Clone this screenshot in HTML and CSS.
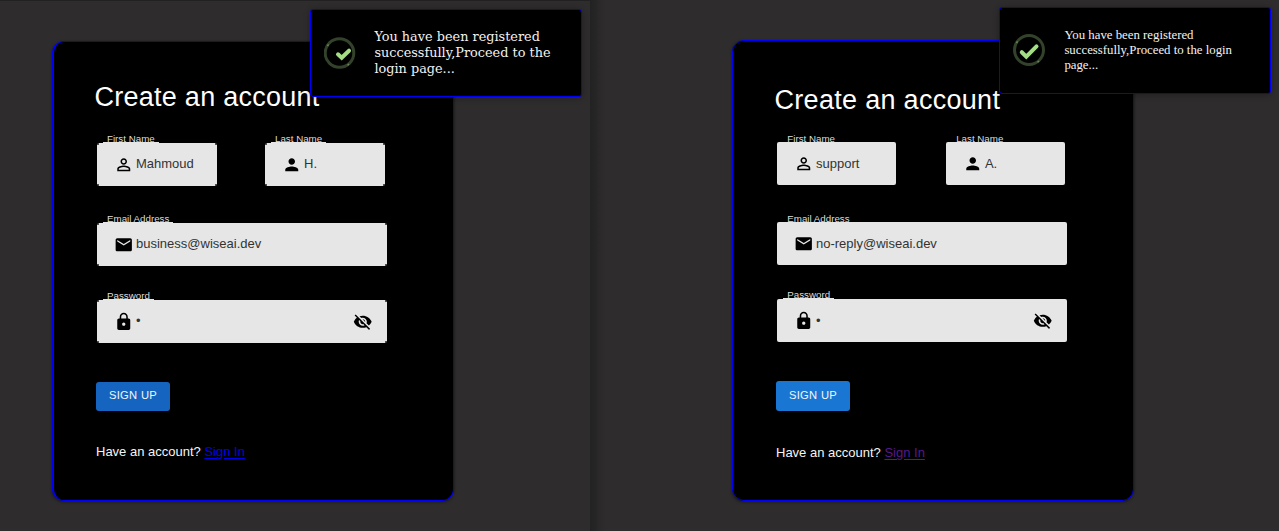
FILE: index.html
```
<!DOCTYPE html>
<html lang="en">
<head>
<meta charset="utf-8">
<title>Create an account</title>
<link rel="stylesheet" href="styles.css">
</head>
<body>
<svg width="0" height="0" class="defs" aria-hidden="true">
  <symbol id="person-outline" viewBox="0 0 24 24"><path d="M12 5.900c1.160 0 2.100.94 2.100 2.100s-.94 2.100-2.100 2.100S9.900 9.160 9.900 8s.94-2.100 2.100-2.100m0 9c2.970 0 6.100 1.460 6.100 2.100v1.100H5.900V17c0-.640 3.130-2.100 6.100-2.100M12 4C9.790 4 8 5.790 8 8s1.790 4 4 4 4-1.790 4-4-1.790-4-4-4zm0 9c-2.670 0-8 1.340-8 4v3h16v-3c0-2.660-5.330-4-8-4z"/></symbol>
  <symbol id="person" viewBox="0 0 24 24"><path d="M12 12c2.210 0 4-1.790 4-4s-1.790-4-4-4-4 1.790-4 4 1.790 4 4 4zm0 2c-2.670 0-8 1.340-8 4v2h16v-2c0-2.660-5.330-4-8-4z"/></symbol>
  <symbol id="mail" viewBox="0 0 24 24"><path d="M20 4H4c-1.100 0-1.990.9-1.990 2L2 18c0 1.100.9 2 2 2h16c1.100 0 2-.9 2-2V6c0-1.100-.9-2-2-2zm0 4l-8 5-8-5V6l8 5 8-5v2z"/></symbol>
  <symbol id="lock" viewBox="0 0 24 24"><path d="M18 8h-1V6c0-2.760-2.240-5-5-5S7 3.240 7 6v2H6c-1.100 0-2 .9-2 2v10c0 1.100.9 2 2 2h12c1.100 0 2-.9 2-2V10c0-1.100-.9-2-2-2zm-6 9c-1.100 0-2-.9-2-2s.9-2 2-2 2 .9 2 2-.9 2-2 2zm3.100-9H8.900V6c0-1.710 1.390-3.100 3.100-3.100 1.710 0 3.100 1.390 3.100 3.100v2z"/></symbol>
  <symbol id="eye-off" viewBox="0 0 24 24"><path d="M12 7c2.760 0 5 2.240 5 5 0 .65-.13 1.260-.36 1.830l2.920 2.920c1.510-1.260 2.700-2.890 3.430-4.750-1.730-4.390-6-7.500-11-7.500-1.400 0-2.740.25-3.980.7l2.160 2.160C10.740 7.130 11.350 7 12 7zM2 4.270l2.280 2.280.46.46C3.080 8.300 1.780 10.020 1 12c1.730 4.390 6 7.500 11 7.500 1.550 0 3.030-.3 4.380-.84l.42.42L19.730 22 21 20.730 3.270 3 2 4.270zM7.530 9.800l1.550 1.550c-.05.21-.08.43-.08.65 0 1.660 1.340 3 3 3 .22 0 .44-.03.65-.08l1.550 1.550c-.67.33-1.410.53-2.200.53-2.760 0-5-2.240-5-5 0-.79.2-1.530.53-2.200zm4.310-.78l3.150 3.150.02-.16c0-1.660-1.340-3-3-3l-.17.01z"/></symbol>
</svg>

<main class="screens">
  <section class="pane pane-left">
    <div class="card">
      <h1 class="title">Create an account</h1>
      <form class="form">
        <div class="names">
          <div class="field"><label class="label">First Name</label><div class="box"><svg class="icon"><use href="#person-outline"/></svg><span>Mahmoud</span></div></div>
          <div class="field"><label class="label">Last Name</label><div class="box"><svg class="icon"><use href="#person"/></svg><span>H.</span></div></div>
        </div>
        <div class="field email"><label class="label">Email Address</label><div class="box"><svg class="icon"><use href="#mail"/></svg><span>business@wiseai.dev</span></div></div>
        <div class="field password"><label class="label">Password</label><div class="box"><svg class="icon"><use href="#lock"/></svg><span class="dots">•</span><svg class="icon eye"><use href="#eye-off"/></svg></div></div>
        <button type="button" class="submit">SIGN UP</button>
      </form>
      <p class="footer">Have an account? <a href="#" class="link">Sign In</a></p>
    </div>
    <aside class="toast">
      <svg class="status" viewBox="0 0 32 32"><circle class="ring" cx="15.500" cy="16" r="14.300"/><path class="glint" d="M3.500 9l1-1.600M23.500 28.200l1.600-1"/><path class="tick" d="M14 17.300l3.700 3.400 7.300-7"/></svg>
      <p class="message">You have been registered<br>successfully,Proceed to the<br>login page...</p>
    </aside>
  </section>

  <section class="pane pane-right">
    <div class="card">
      <h1 class="title">Create an account</h1>
      <form class="form">
        <div class="names">
          <div class="field"><label class="label">First Name</label><div class="box"><svg class="icon"><use href="#person-outline"/></svg><span>support</span></div></div>
          <div class="field"><label class="label">Last Name</label><div class="box"><svg class="icon"><use href="#person"/></svg><span>A.</span></div></div>
        </div>
        <div class="field email"><label class="label">Email Address</label><div class="box"><svg class="icon"><use href="#mail"/></svg><span>no-reply@wiseai.dev</span></div></div>
        <div class="field password"><label class="label notched">Password</label><div class="box"><svg class="icon"><use href="#lock"/></svg><span class="dots">•</span><svg class="icon eye"><use href="#eye-off"/></svg></div></div>
        <button type="button" class="submit">SIGN UP</button>
      </form>
      <p class="footer">Have an account? <a href="#" class="link">Sign In</a></p>
    </div>
    <aside class="toast">
      <svg class="status" viewBox="0 0 32 32"><circle class="ring" cx="16" cy="16" r="14.500"/><path class="glint" d="M3.500 9l1-1.600M24.500 28.200l1.600-1"/><path class="tick" d="M8.800 18.200l4.500 4.400 10.200-10.200"/></svg>
      <p class="message">You have been registered<br>successfully,Proceed to the login<br>page...</p>
    </aside>
  </section>
</main>
</body>
</html>
```
FILE: styles.css
```
* { box-sizing: border-box; }
body {
  margin: 0;
  background: #2e2c2d;
  font-family: "Liberation Sans", Arial, sans-serif;
  font-size: 13px;
}
.defs { position: absolute; }
.screens { display: flex; width: 1279px; height: 531px; overflow: hidden; }
.pane { position: relative; height: 531px; }
.pane-left { width: 590px; padding: 40px 0 0 52px; border-top: 1px solid #222122; }
.pane-right {
  width: 689px;
  padding: 40px 0 0 142px;
  background: linear-gradient(90deg, #232223 0, #262526 5px, #2b292a 10px, #2e2c2d 16px);
}

.card {
  width: 402px;
  height: 460px;
  padding: 39px 0 0 43px;
  border: 1px solid #0000f8;
  border-radius: 12px;
  background: #000;
  box-shadow: 0 1px 3px rgba(0, 0, 0, .5);
}
.pane-left .card { border-left-width: 2px; }
.pane-right .card { height: 461px; padding: 43px 0 0 44px; }

.title {
  margin: 0 0 17px -2.500px;
  color: #fff;
  font-size: 27px;
  font-weight: 400;
  line-height: 32px;
  letter-spacing: .26px;
  white-space: nowrap;
}
.pane-right .title { margin-bottom: 13px; letter-spacing: .3px; }

.names { display: flex; gap: 48.500px; }
.pane-right .names { gap: 49.500px; }
.names .field { width: 119.500px; }
.pane-right .names .field { width: 119.400px; }
.field { width: 290px; }
.email { margin-top: 24px; }
.password { margin-top: 21px; }
.label {
  display: block;
  width: max-content;
  height: 13px;
  margin-left: 6px;
  padding: 0 4px;
  color: #dedede;
  font-size: 9.750px;
  line-height: 17px;
}
.pane-right .label { line-height: 19px; margin-left: 6.300px; }
.pane-right .password .label { line-height: 17px; }
.pane-left .label, .notched { border-bottom: 1px solid #e6e6e6; }
.box {
  display: flex;
  align-items: center;
  gap: 2.500px;
  height: 43px;
  padding: 0 15px 0 17px;
  border-radius: 2px;
  background: #e6e6e6;
  color: #333;
  white-space: nowrap;
}
/* small dots where the outline's corners meet */
.pane-left .box {
  background:
    radial-gradient(circle at 1px 1px, #555 .8px, transparent 1.500px),
    radial-gradient(circle at calc(100% - 1px) 1px, #555 .8px, transparent 1.500px),
    radial-gradient(circle at 1px calc(100% - 1px), #555 .8px, transparent 1.500px),
    radial-gradient(circle at calc(100% - 1px) calc(100% - 1px), #555 .8px, transparent 1.500px),
    #e6e6e6;
}
.box span { line-height: 16px; margin-top: -1px; }
.pane-right .box span { margin-top: 1px; }
.icon { width: 19.500px; height: 19.500px; flex: none; fill: #000; }
.eye { margin-left: auto; }

.submit {
  display: block;
  width: 74px;
  height: 29px;
  margin: 39px 0 33px -1px;
  padding: 0 0 3px;
  border: 0;
  border-radius: 3px;
  background: #1565c0;
  color: #f2f6fb;
  font: 11.200px "Liberation Sans", Arial, sans-serif;
  letter-spacing: .3px;
}
.pane-right .submit { height: 30px; margin-bottom: 34px; padding-bottom: 2px; background: #1976d2; }
.footer { margin: 0 0 0 -1px; color: #f5f5f5; line-height: 16px; }
.link { color: #0000ee; text-underline-offset: 2px; }
.pane-right .link { color: #551a8b; }

.toast {
  position: absolute;
  top: 8px;
  left: 310px;
  display: flex;
  align-items: center;
  width: 272px;
  height: 88px;
  padding: 0 0 1px 13px;
  border: 1px solid #0000f8;
  border-radius: 3px;
  background: #000;
  box-shadow: 0 1px 6px rgba(0, 0, 0, .3);
}
.pane-right .toast { top: 7px; left: 409px; height: 87px; padding-bottom: 2px; }
.status { width: 32px; height: 32px; flex: none; fill: none; }
.ring { stroke: #33422a; stroke-width: 3px; }
.glint { stroke: #66894f; stroke-width: 1.500px; }
.tick { stroke: #a5dc86; stroke-width: 4px; stroke-linecap: round; }
.message {
  margin: 0 0 0 18.400px;
  color: #f2f2f2;
  font-family: "DejaVu Serif", serif;
  font-size: 12.850px;
  line-height: 16px;
  white-space: nowrap;
}
.pane-right .message {
  margin-top: 2px;
  margin-left: 19.400px;
  font-family: "Liberation Serif", "Times New Roman", serif;
  font-size: 12.800px;
  line-height: 15px;
}
```
